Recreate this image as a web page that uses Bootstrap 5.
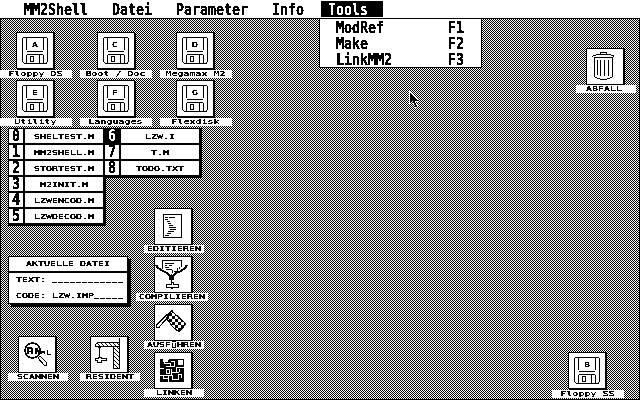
<!DOCTYPE html>
<html lang="de">
<head>
<meta charset="utf-8">
<title>MM2Shell</title>
<link href="https://cdn.jsdelivr.net/npm/bootstrap@5.3.0/dist/css/bootstrap.min.css" rel="stylesheet">
<style>
body{width:640px;height:400px;overflow:hidden;background:#fff;color:#000;font-family:"DejaVu Sans Mono",monospace}
.screen{width:640px;height:400px;filter:url(#mono)}
/* system font, 8x16 cells */
.big{font-weight:700;font-size:13.29px;line-height:15px;white-space:pre}
.big span{display:block;height:15px;transform:translateY(2px) scaleY(1.15);transform-origin:0 12px;-webkit-text-stroke:.15px currentColor}
.menubar{height:18px;padding:1px 0 0 16px;gap:8px}
.menubar .nav-link{height:16px;padding:0 8px;color:#000}
.menubar .nav-link.active{background:#000;color:#fff;margin-left:1px;padding:0 0 0 7px;width:62px}
/* small font, 6x6 cells */
.tiny{font-size:9.967px;line-height:9px;height:8px;white-space:pre}
.tiny>span{display:inline-block;height:9px;vertical-align:top;transform:translateY(-2px) scaleY(.7);transform-origin:0 8px;-webkit-text-stroke:.2px currentColor}
.tiny .blank{font-size:8px;letter-spacing:1.184px;line-height:1px;position:relative;top:-2px}
.tiny .low{display:inline-block;transform:translateY(1.4px) scaleY(1.25);transform-origin:0 8px;-webkit-text-stroke:0}
.desk{height:382px;border:1px solid #000;background:conic-gradient(#fff 25%,#000 0 50%,#fff 0 75%,#000 0) 0 0/2px 2px}
.item{position:absolute}
.tile{width:38px;height:37px;border:1px solid #000;background:#fff;box-shadow:1px 1px 0 #000}
.tile svg{display:block;margin:-1px;fill:none;stroke:#000;shape-rendering:crispEdges}
.tile text{font-size:9.967px;fill:#000;stroke-width:.2px}
.caption{background:#fff;text-align:center;width:60px}
.caption.wide{width:72px}
.tall .tile{margin-bottom:1px}
.tall .caption{padding-right:1px}
.drop{position:absolute;left:319px;top:18px;width:163px;height:50px;border:1px solid #000;background:#fff;padding:0 17px 0 16px}
.drop .choice{height:16px}
.files{position:absolute;background:#000;padding:1px 3px 3px 1px;gap:2px}
.files .entry{gap:2px;height:14px}
.files .key{width:14px;height:14px;background:#fff;padding-left:3px}
.files .key span{transform:scaleY(1.15)}
.files .name{width:78px;height:14px;background:#fff;padding-top:4px;text-align:center}
.files .key.sel{background:#000;color:#fff}
.panel{position:absolute;left:8px;top:256px;width:120px;height:48px;background:#fff;border:1px solid #000;box-shadow:3px 3px 0 #000}
.panel .head{height:16px;border-bottom:2px solid #000;padding:3px 0 0;text-align:center}
.panel .fields{padding:3px 0 0 7px;gap:8px}
.pointer{position:absolute;left:409px;top:91px}
</style>
<script src="https://cdn.jsdelivr.net/npm/bootstrap@5.3.0/dist/js/bootstrap.bundle.min.js"></script>
</head>
<body>
<svg width="0" height="0" class="position-absolute">
<defs>
<!-- one-bit display: every channel is either off or on -->
<filter id="mono" x="0" y="0" width="1" height="1" color-interpolation-filters="sRGB"><feComponentTransfer><feFuncR type="discrete" tableValues="0 0 0 1 1"/><feFuncG type="discrete" tableValues="0 0 0 1 1"/><feFuncB type="discrete" tableValues="0 0 0 1 1"/></feComponentTransfer></filter>
<symbol id="disk" viewBox="0 0 38 37"><path d="M7 5.500H31M6.500 6V30M31.500 6V30M7 30.500H8M8 31.500H31M30.500 30V31"/><path d="M10.500 6V18M11 19.500H27M27.500 6V18M10.500 23V31M11 22.500H27M27.500 23V31M23.500 23V31M14.500 24.500H17.500V29.500H14.500Z"/></symbol>
<pattern id="check" width="6" height="6" patternUnits="userSpaceOnUse"><path fill="#000" stroke="none" d="M0 0h3v3h-3zM3 3h3v3h-3z"/></pattern>
<pattern id="dots" width="4" height="4" patternUnits="userSpaceOnUse"><path fill="#000" stroke="none" d="M0 0h1v1h-1zM2 2h1v1h-1zM1 1h1v1h-1zM3 3h1v1h-1z"/></pattern>
</defs>
</svg>
<div class="screen position-relative">
<nav class="menubar big d-flex bg-white">
<a class="nav-link"><span>MM2Shell</span></a><a class="nav-link"><span>Datei</span></a><a class="nav-link"><span>Parameter</span></a><a class="nav-link"><span>Info</span></a><a class="nav-link active"><span>Tools</span></a>
</nav>
<main class="desk">
<div class="item tall" style="left:0;top:32px"><div class="tile" style="margin-left:16px"><svg width="38" height="37"><use href="#disk"/><text transform="translate(16 15) scale(1 .7)">A</text></svg></div><div class="caption wide tiny"><span>Floppy DS</span></div></div>
<div class="item tall" style="left:80px;top:32px"><div class="tile" style="margin-left:17px"><svg width="38" height="37"><use href="#disk"/><text transform="translate(15 15) scale(1 .7)">C</text></svg></div><div class="caption wide tiny"><span>Boot / Doc</span></div></div>
<div class="item tall" style="left:160px;top:32px"><div class="tile" style="margin-left:16px"><svg width="38" height="37"><use href="#disk"/><text transform="translate(16 15) scale(1 .7)">D</text></svg></div><div class="caption wide tiny"><span>Megamax M2</span></div></div>
<div class="item tall" style="left:0;top:80px"><div class="tile" style="margin-left:16px"><svg width="38" height="37"><use href="#disk"/><text transform="translate(16 15) scale(1 .7)">E</text></svg></div><div class="caption wide tiny"><span>Utility</span></div></div>
<div class="item tall" style="left:80px;top:80px"><div class="tile" style="margin-left:17px"><svg width="38" height="37"><use href="#disk"/><text transform="translate(15 15) scale(1 .7)">F</text></svg></div><div class="caption wide tiny"><span>Languages</span></div></div>
<div class="item tall" style="left:160px;top:80px"><div class="tile" style="margin-left:16px"><svg width="38" height="37"><use href="#disk"/><text transform="translate(16 15) scale(1 .7)">G</text></svg></div><div class="caption wide tiny"><span>Flexdisk</span></div></div>
<div class="item tall" style="left:552px;top:352px"><div class="tile" style="margin-left:16px"><svg width="38" height="37"><use href="#disk"/><text transform="translate(16 15) scale(1 .7)">B</text></svg></div><div class="caption wide tiny"><span>Floppy SS</span></div></div>

<div class="item" style="left:576px;top:48px"><div class="tile" style="margin-left:10px"><svg width="38" height="37"><path d="M14.500 7V4.500H20.500V7M10 6.500H25M7 7.500H10M25 7.500H28M6 8.500H7M27 8.500H28M8 9.500H27M8.500 10V29M26.500 10V29M9 29.500H11M24 29.500H26M11 30.500H14M21 30.500H24M14 31.500H21M11.500 12V27M14.500 12V28M18.500 12V28M22.500 12V28"/></svg></div><div class="caption tiny pe-1"><span>ABFALL</span></div></div>

<div class="item" style="left:144px;top:208px"><div class="tile" style="margin-left:10px"><svg width="38" height="37"><path d="M9.500 6.500H27.500V29.500H9.500ZM11 9.500H14M15 9.500H21M11 11.500H14M13 13.500H16M14 15.500H17M15 17.500H19M15 19.500H22M16 21.500H22M14 23.500H20M13 25.500H17M11 27.500H15"/></svg></div><div class="caption tiny"><span>EDITIEREN</span></div></div>

<div class="item" style="left:136px;top:256px"><div class="tile" style="margin-left:18px"><svg width="38" height="37"><path d="M8.500 13V4.500H27.500V11M11 7.500H20M11 9.500H13M15 9.500H18M11 11.500H15M12 13.500H18M25.500 11V13M23.500 12V15M20 15.500H23M18.500 14V17"/><path stroke-width="2" d="M2 9L4 12L9 15L13 17L16 20V24M33 9L31 12L27 15L22 17L19 20V24"/><path d="M17.500 18V26M12 28.500H17V26.500H19V28.500H24V31.500H18M12.500 28V32M12 31.500H17V32.500H19"/></svg></div><div class="caption wide tiny"><span>COMPILIEREN</span></div></div>

<div class="item" style="left:144px;top:304px"><div class="tile" style="margin-left:10px"><svg width="38" height="37"><path fill="url(#check)" d="M18 7L32 20L25 28L19 23L12 14Z"/><path d="M18.500 6L2.500 21V23.500H5L17 9"/><path d="M18 6L3 20M17 10L5 23"/></svg></div><div class="caption tiny"><span>AUSF<span class="low">ü</span>HREN</span></div></div>

<div class="item" style="left:144px;top:352px"><div class="tile" style="margin-left:10px"><svg width="38" height="37"><path fill="#000" stroke="none" d="M6 7H30V30H6Z"/><path stroke="#fff" d="M9 7.500H15M10.500 8V11M10 11.500H17M16.500 11V15M12 14.500H20M20.500 9V15M17 9.500H21M22 15.500H30M22.500 15V20M5 16.500H10M12.500 17.500H15.500V21.500H12.500ZM17.500 17V24M17 20.500H25M25.500 17V20M6 23.500H17M9.500 23V27M9 26.500H15M14.500 24V30M18.500 23V27M18 27.500H25M24.500 22V28M24 22.500H28M27.500 22V26"/><path fill="#fff" stroke="none" d="M24 8h5v5h-5zM9 7h5v3h-5z"/></svg></div><div class="caption tiny"><span>LINKEN</span></div></div>

<div class="item" style="left:8px;top:336px"><div class="tile" style="margin-left:10px"><svg width="38" height="37"><circle cx="14.500" cy="14.500" r="7.500" stroke-width="1.500"/><path stroke-width="2" d="M10 18V13M9 12H14M14 12V18M18 18V12M18 12L22 18M22 18V12"/><path d="M10 15.500H14M23.500 18V15.500H26.500V18M23 16.500H27M29.500 14V18.500H33M20 22L26 29H28.500V26.500L22 20ZM19 20L21 22"/></svg></div><div class="caption tiny"><span>SCANNEN</span></div></div>

<div class="item" style="left:80px;top:336px"><div class="tile" style="margin-left:10px"><svg width="38" height="37"><path fill="url(#dots)" d="M7.500 6.500H29.500V32.500H23.500V10.500H5.500V8.500Z"/><path d="M29.500 2V7M23 10.500H30M8 11.500H11M9.500 11V21M5.500 22.500H8.500V21.500H11.500V22.500H16.500V24.500H11.500V26.500H7.500V24.500H5.500Z"/></svg></div><div class="caption tiny"><span>RESIDENT</span></div></div>

<div class="files d-flex flex-column" style="left:8px;top:128px">
<div class="entry d-flex"><div class="key big"><span>0</span></div><div class="name tiny"><span>SHELTEST.M</span></div></div>
<div class="entry d-flex"><div class="key big"><span>1</span></div><div class="name tiny"><span>MM2SHELL.M</span></div></div>
<div class="entry d-flex"><div class="key big"><span>2</span></div><div class="name tiny"><span>STORTEST.M</span></div></div>
<div class="entry d-flex"><div class="key big"><span>3</span></div><div class="name tiny"><span>M2INIT.M</span></div></div>
<div class="entry d-flex"><div class="key big"><span>4</span></div><div class="name tiny"><span>LZWENCOD.M</span></div></div>
<div class="entry d-flex"><div class="key big"><span>5</span></div><div class="name tiny"><span>LZWDECOD.M</span></div></div>
</div>
<div class="files d-flex flex-column" style="left:104px;top:128px">
<div class="entry d-flex"><div class="key sel big"><span>6</span></div><div class="name tiny"><span>LZW.I</span></div></div>
<div class="entry d-flex"><div class="key big"><span>7</span></div><div class="name tiny"><span>T.M</span></div></div>
<div class="entry d-flex"><div class="key big"><span>8</span></div><div class="name tiny"><span>TODO.TXT</span></div></div>
</div>

<section class="panel">
<div class="head"><div class="tiny"><span>AKTUELLE DATEI</span></div></div>
<div class="fields d-flex flex-column"><div class="tiny"><span>TEXT: <span class="blank">____________</span></span></div><div class="tiny"><span>CODE: LZW.IMP<span class="blank">_____</span></span></div></div>
</section>

<div class="drop big d-flex flex-column">
<div class="choice d-flex justify-content-between"><span>ModRef</span><span>F1</span></div>
<div class="choice d-flex justify-content-between"><span>Make</span><span>F2</span></div>
<div class="choice d-flex justify-content-between"><span>LinkMM2</span><span>F3</span></div>
</div>
<svg class="pointer" width="12" height="18"><path fill="#000" stroke="#fff" stroke-width="1" d="M.5 .5V13.500L3.500 10.500L6.500 16.500L8.500 15.500L6.500 10.500H10Z"/></svg>
</main>
</div>
</body>
</html>
